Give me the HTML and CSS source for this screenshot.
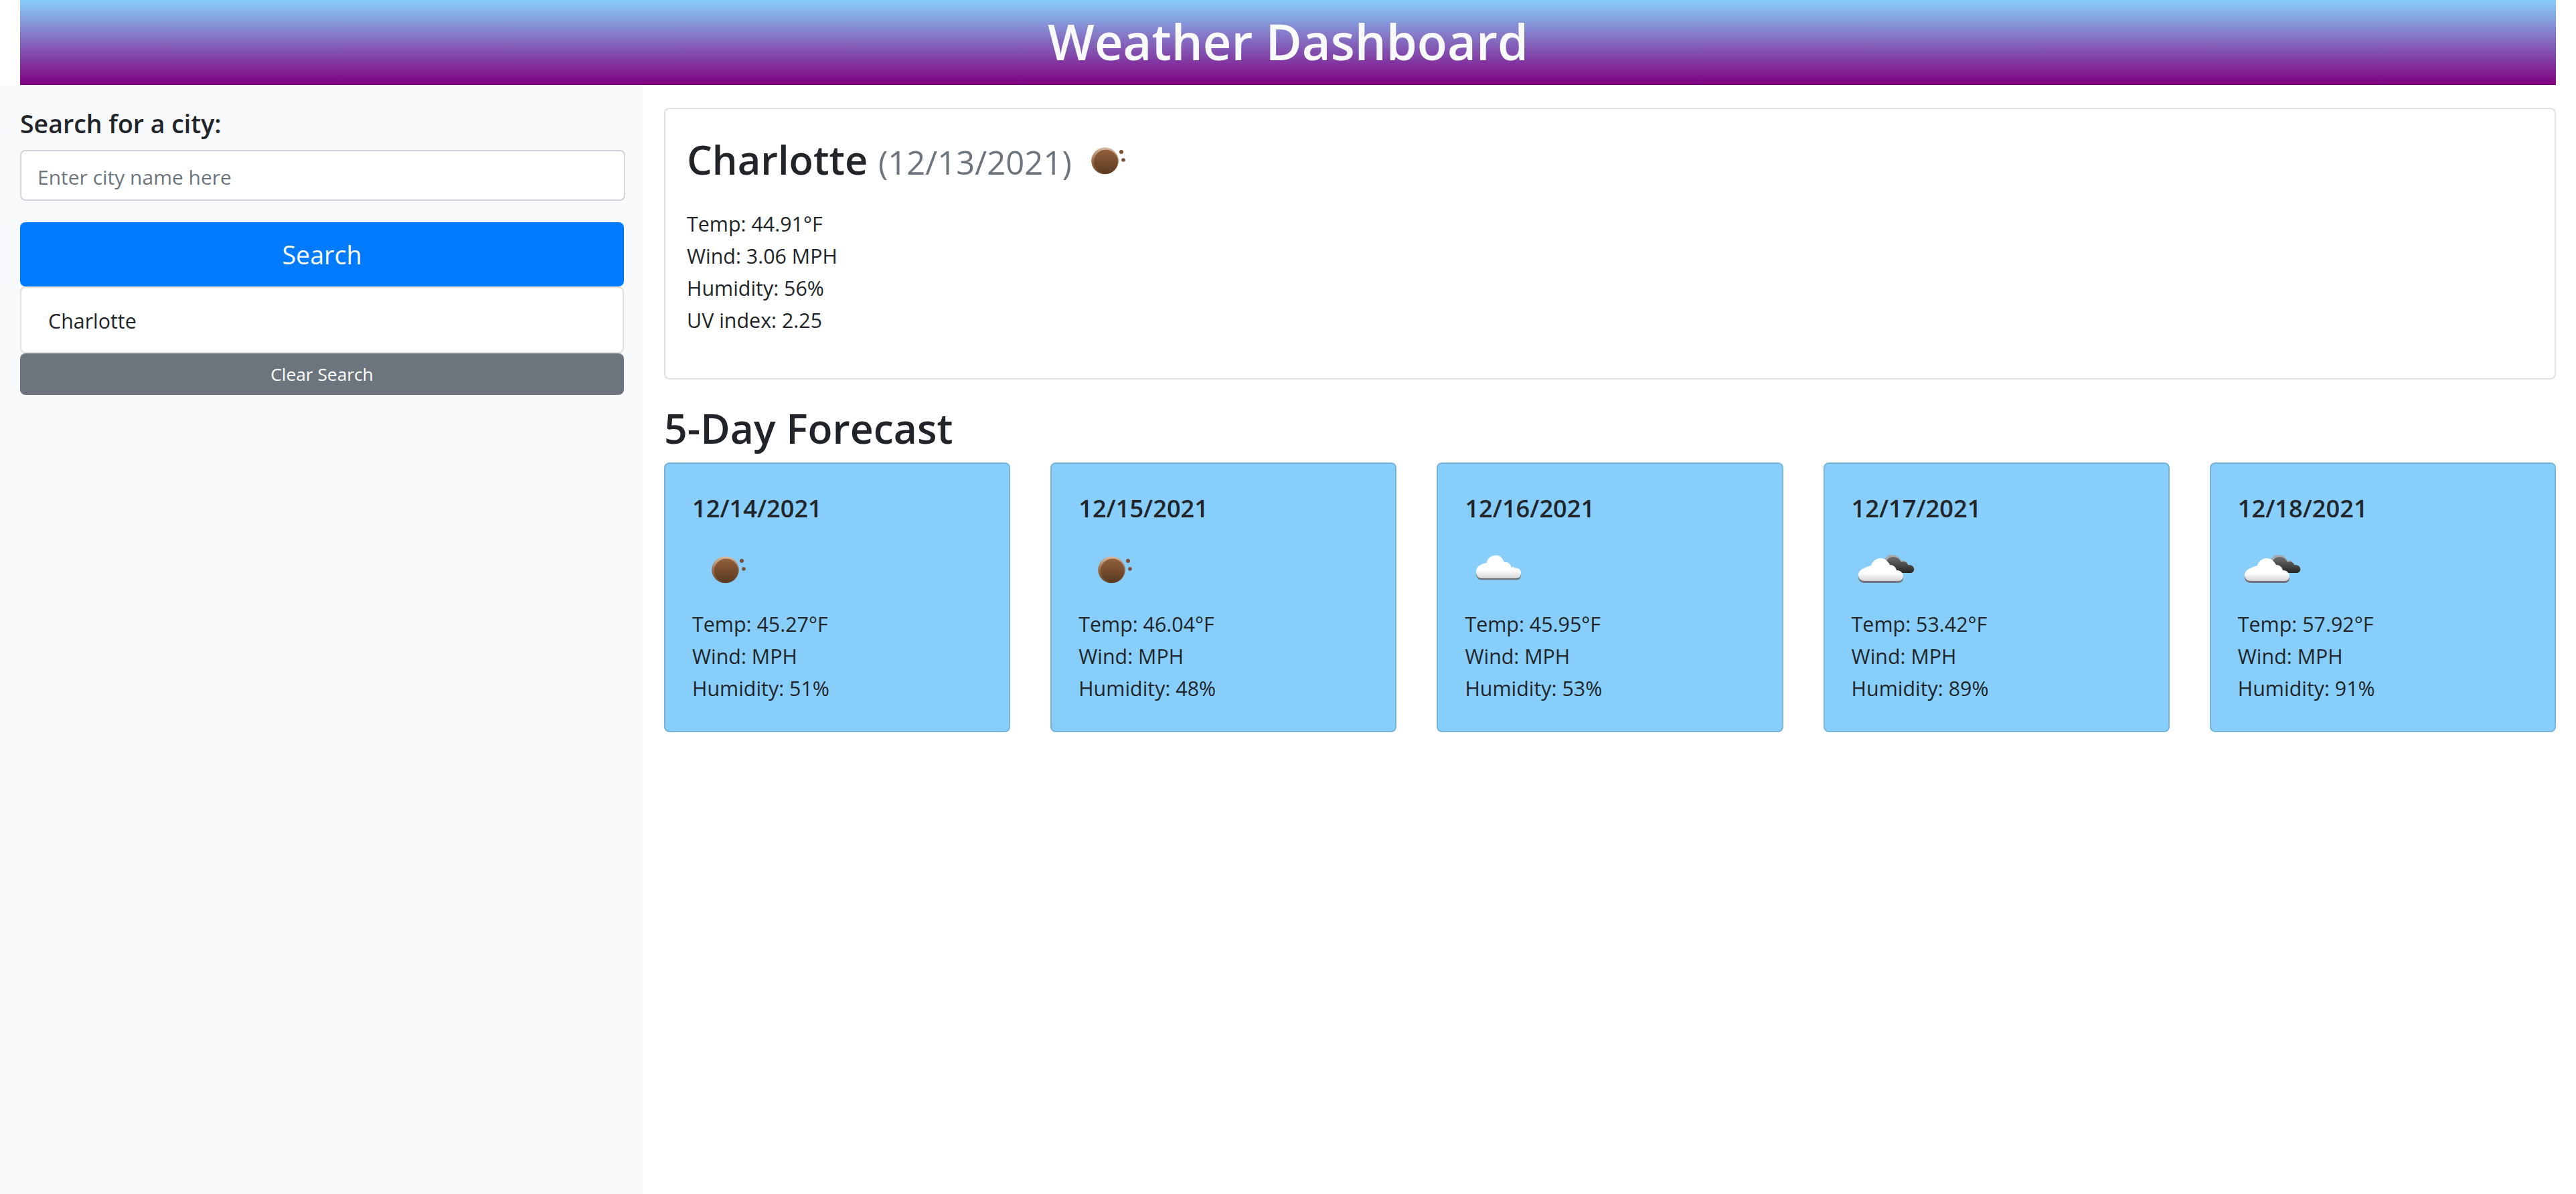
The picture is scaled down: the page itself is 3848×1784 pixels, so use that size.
FILE: index.html
```html
<!DOCTYPE html>
<html lang="en">
<head>
<meta charset="UTF-8" />
<title>Weather Dashboard</title>
<link rel="stylesheet" href="styles.css">
</head>
<body>
  <!-- shared weather icons -->
  <svg class="icon-defs" aria-hidden="true">
    <defs>
      <linearGradient id="ballRim" x1="0" y1="0" x2="0" y2="1">
        <stop offset="0" stop-color="#d8bca6" />
        <stop offset="0.5" stop-color="#9a6a45" />
        <stop offset="1" stop-color="#6a452b" />
      </linearGradient>
      <linearGradient id="ballFill" x1="0" y1="0" x2="0" y2="1">
        <stop offset="0" stop-color="#93603c" />
        <stop offset="1" stop-color="#5a3a22" />
      </linearGradient>
      <linearGradient id="whiteCloud" x1="0" y1="0" x2="0" y2="1">
        <stop offset="0" stop-color="#ffffff" />
        <stop offset="0.65" stop-color="#ffffff" />
        <stop offset="1" stop-color="#d4d4d4" />
      </linearGradient>
      <linearGradient id="darkCloud" x1="0" y1="0" x2="0" y2="1">
        <stop offset="0" stop-color="#6e6e6e" />
        <stop offset="1" stop-color="#262626" />
      </linearGradient>
      <filter id="soft" x="-10%" y="-10%" width="120%" height="120%">
        <feGaussianBlur stdDeviation="0.7" />
      </filter>
      <symbol id="icon-ball" viewBox="0 0 100 100">
        <g filter="url(#soft)">
          <ellipse cx="49.5" cy="50.3" rx="20.3" ry="20" fill="url(#ballRim)" />
          <ellipse cx="50.8" cy="51.5" rx="17.8" ry="17.8" fill="url(#ballFill)" />
          <circle cx="74" cy="37" r="3" fill="#7b4d35" />
          <circle cx="77" cy="49" r="2.8" fill="#7b4d35" />
        </g>
      </symbol>
      <symbol id="icon-cloud" viewBox="0 0 100 100">
        <g filter="url(#soft)">
          <path transform="translate(0 2.5)" fill="#70767c" d="M25 63 H78 C83 63 84 58 84 55 C84 50 80 47 76 48 C74 46 71 46 70 47 C68 41 64 38 59 39 C56 31 51 28 45 29 C39 29 34 33 33 40 C24 41 17 46 17 53 C17 59 20 63 25 63 Z" />
          <path fill="url(#whiteCloud)" d="M25 63 H78 C83 63 84 58 84 55 C84 50 80 47 76 48 C74 46 71 46 70 47 C68 41 64 38 59 39 C56 31 51 28 45 29 C39 29 34 33 33 40 C24 41 17 46 17 53 C17 59 20 63 25 63 Z" />
        </g>
      </symbol>
      <symbol id="icon-clouds" viewBox="0 0 100 100">
        <g filter="url(#soft)">
          <path fill="#a5a9ad" d="M60 55 H88 C92 55 94 51 93 48 C92 44 88 43 84 43 C83 38 78 35 74 37 C72 31 66 28 60 28 C53 28 48 34 47 41 Z" />
          <path fill="url(#darkCloud)" d="M62 55 H88 C92 55 94 51 93 48 C92 44 88 43 84 43 C83 39 78 37 74 39 C72 34 67 31 62 31 C56 31 51 36 50 42 Z" />
          <path transform="translate(0 3)" fill="#70767c" d="M20 67 H70 C75 67 77 63 77 60 C77 55 73 51 67 51 C66 46 62 43 57 43 C54 37 49 33 43 33 C36 33 31 38 29 44 C22 46 10 50 10 58 C10 64 14 67 20 67 Z" />
          <path fill="url(#whiteCloud)" d="M20 67 H70 C75 67 77 63 77 60 C77 55 73 51 67 51 C66 46 62 43 57 43 C54 37 49 33 43 33 C36 33 31 38 29 44 C22 46 10 50 10 58 C10 64 14 67 20 67 Z" />
        </g>
      </symbol>
    </defs>
  </svg>

  <header class="page-header">
    <h1>Weather Dashboard</h1>
  </header>

  <div class="layout">
    <aside class="sidebar">
      <h5 class="search-label">Search for a city:</h5>
      <input class="city-input" type="text" placeholder="Enter city name here">
      <button class="btn btn-search">Search</button>
      <div class="history-item">Charlotte</div>
      <button class="btn btn-clear">Clear Search</button>
    </aside>

    <main class="content">
      <section class="today">
        <h2 class="today-title">Charlotte <small>(12/13/2021)</small>
          <svg class="weather-icon"><use href="#icon-ball" /></svg>
        </h2>
        <p>Temp: 44.91°F</p>
        <p>Wind: 3.06 MPH</p>
        <p>Humidity: 56%</p>
        <p>UV index: 2.25</p>
      </section>

      <h2 class="forecast-title">5-Day Forecast</h2>
      <div class="forecast">
        <div class="day-card">
          <h5>12/14/2021</h5>
          <svg class="weather-icon"><use href="#icon-ball" /></svg>
          <p>Temp: 45.27°F</p>
          <p>Wind: MPH</p>
          <p>Humidity: 51%</p>
        </div>
        <div class="day-card">
          <h5>12/15/2021</h5>
          <svg class="weather-icon"><use href="#icon-ball" /></svg>
          <p>Temp: 46.04°F</p>
          <p>Wind: MPH</p>
          <p>Humidity: 48%</p>
        </div>
        <div class="day-card">
          <h5>12/16/2021</h5>
          <svg class="weather-icon"><use href="#icon-cloud" /></svg>
          <p>Temp: 45.95°F</p>
          <p>Wind: MPH</p>
          <p>Humidity: 53%</p>
        </div>
        <div class="day-card">
          <h5>12/17/2021</h5>
          <svg class="weather-icon"><use href="#icon-clouds" /></svg>
          <p>Temp: 53.42°F</p>
          <p>Wind: MPH</p>
          <p>Humidity: 89%</p>
        </div>
        <div class="day-card">
          <h5>12/18/2021</h5>
          <svg class="weather-icon"><use href="#icon-clouds" /></svg>
          <p>Temp: 57.92°F</p>
          <p>Wind: MPH</p>
          <p>Humidity: 91%</p>
        </div>
      </div>
    </main>
  </div>
</body>
</html>
```
FILE: styles.css
```css
* {
  box-sizing: border-box;
}
body {
  margin: 0;
  background: #fff;
  color: #212529;
  font-family: "Open Sans", "Noto Sans", sans-serif;
  font-size: 30.4px;
  line-height: 48px;
}
h1, h2, h5, p {
  margin: 0;
}
.icon-defs {
  display: block;
  width: 0;
  height: 0;
}
.page-header {
  height: 127px;
  margin: 0 30px;
  padding-bottom: 3px;
  display: flex;
  justify-content: center;
  align-items: center;
  background: linear-gradient(#87cefa, #800080);
}
.page-header h1 {
  color: #f8f9fa;
  font-size: 74px;
  font-weight: 600;
  line-height: 1.2;
}
.layout {
  display: flex;
  height: 1657px;
}
.sidebar {
  width: 960px;
  padding: 32px 26px 0 30px;
  background: #f8f9fa;
}
.search-label {
  font-size: 37.5px;
  font-weight: 600;
  line-height: 48px;
  margin-bottom: 17px;
  padding-top: 2px;
  height: 48px;
}
.city-input {
  display: block;
  width: 100%;
  height: 76px;
  padding: 14px 24px 10px;
  border: 2px solid #ced4da;
  border-radius: 8px;
  background: #fff;
  color: #495057;
  font: inherit;
  font-size: 30px;
  margin-bottom: 32px;
}
.city-input::placeholder {
  color: #6c757d;
}
.btn {
  display: block;
  width: 902px;
  border: none;
  border-radius: 8px;
  color: #fff;
  font-family: inherit;
  text-align: center;
}
.btn-search {
  height: 96px;
  background: #007bff;
  font-size: 37.6px;
}
.history-item {
  width: 902px;
  height: 100px;
  padding: 26px 40px 22px;
  border: 2px solid rgba(0, 0, 0, 0.125);
  border-radius: 8px;
  background: #fff;
}
.btn-clear {
  height: 62px;
  background: #6c757d;
  font-size: 26.3px;
}
.content {
  flex: 1;
  padding: 34px 30px 0 32px;
}
.today {
  height: 406px;
  padding: 27px 32px 32px;
  border: 2px solid #dee2e6;
  border-radius: 8px;
}
.today-title {
  font-size: 59.6px;
  font-weight: 600;
  line-height: 1.2;
  margin-bottom: 21px;
}
.today-title small {
  color: #6c757d;
  font-size: 49px;
  font-weight: 400;
}
.today-title .weather-icon {
  margin-left: -15px;
  vertical-align: -29px;
}
.weather-icon {
  display: inline-block;
  width: 100px;
  height: 100px;
}
.forecast-title {
  font-size: 60.7px;
  font-weight: 600;
  line-height: 1.2;
  margin: 37px 0 10px;
  height: 77px;
}
.forecast {
  display: flex;
  gap: 60px;
}
.day-card {
  flex: 1;
  height: 403px;
  padding: 42px 40px 0;
  border: 2px solid rgba(0, 0, 0, 0.125);
  border-radius: 8px;
  background: #87cefa;
}
.day-card h5 {
  font-size: 36.2px;
  font-weight: 600;
  line-height: 48px;
  margin-bottom: 18px;
}
.day-card .weather-icon {
  display: block;
  margin: 0 0 8px;
}
```
